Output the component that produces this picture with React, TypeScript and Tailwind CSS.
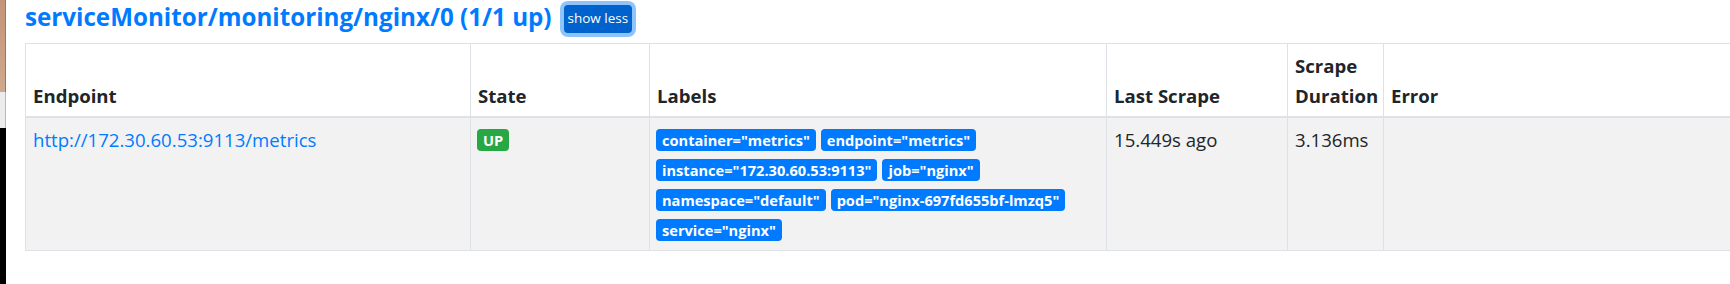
import { FC } from "react";

type Target = {
    endpoint: string;
    state: string;
    labels: string[][];
    lastScrape: string;
    duration: string;
    error: string;
};

const target: Target = {
    endpoint: "http://172.30.60.53:9113/metrics",
    state: "UP",
    labels: [
        ['container="metrics"', 'endpoint="metrics"'],
        ['instance="172.30.60.53:9113"', 'job="nginx"'],
        ['namespace="default"', 'pod="nginx-697fd655bf-lmzq5"'],
        ['service="nginx"'],
    ],
    lastScrape: "15.449s ago",
    duration: "3.136ms",
    error: "",
};

const th = "border-t border-l border-b-2 border-[#dee2e6] px-[7px] pt-[7px] pb-[5px] align-bottom text-left font-bold";
const td = "border-l border-b border-[#dee2e6] px-[7px] pt-[7px] pb-[5px] align-top";

const Badge: FC<{ text: string; green?: boolean }> = ({ text, green }) => (
    <span
        className={`inline-flex items-center h-[22px] px-[6px] rounded-[4px] text-[14.6px] font-bold leading-none text-white whitespace-nowrap ${
            green ? "bg-[#28a745]" : "bg-[#007bff]"
        }`}
    >
        {text}
    </span>
);

const App: FC = () => {
    return (
        <div className="flex w-[1730px] h-[284px] overflow-hidden bg-white font-['Open_Sans',sans-serif] text-[#212529]">
            {/* edge of the neighbouring window */}
            <div className="flex flex-col w-[6px] shrink-0">
                <div className="h-[92px] bg-gradient-to-b from-[#c39479] to-[#d0a98e] border-r border-[#8a7a70]" />
                <div className="h-[36px] bg-[#ececec] border-r border-[#b8b8b8]" />
                <div className="flex-1 bg-black" />
            </div>

            <div className="flex-1 min-w-0 pl-[19px]">
                <div className="flex items-start h-[43px]">
                    <h3 className="shrink-0 text-[24.2px] leading-[33px] font-bold text-[#007bff] whitespace-nowrap">
                        serviceMonitor/monitoring/nginx/0 (1/1 up)
                    </h3>
                    <button className="shrink-0 ml-[12px] mt-[5px] h-[28px] px-[4px] rounded-[4px] bg-[#0062cc] text-white text-[13.5px] leading-none whitespace-nowrap ring-4 ring-[#8fc3fb]">
                        show less
                    </button>
                </div>

                <table className="table-fixed border-separate border-spacing-0 w-[1720px] text-[18.6px] leading-[30px]">
                    <colgroup>
                        <col className="w-[445px]" />
                        <col className="w-[179px]" />
                        <col className="w-[457px]" />
                        <col className="w-[181px]" />
                        <col className="w-[96px]" />
                        <col />
                    </colgroup>
                    <thead>
                        <tr>
                            <th className={th}>Endpoint</th>
                            <th className={th}>State</th>
                            <th className={th}>Labels</th>
                            <th className={th}>Last Scrape</th>
                            <th className={th}>Scrape Duration</th>
                            <th className={th}>Error</th>
                        </tr>
                    </thead>
                    <tbody>
                        <tr className="bg-[#f2f2f2]">
                            <td className={td}>
                                <a href="#" className="text-[#007bff]">
                                    {target.endpoint}
                                </a>
                            </td>
                            <td className={td}>
                                <div className="flex items-center h-[30px] -ml-[1px]">
                                    <Badge text={target.state} green />
                                </div>
                            </td>
                            <td className={td}>
                                {target.labels.map((row, i) => (
                                    <div key={i} className="flex items-center gap-[5px] h-[30px] -ml-[1px]">
                                        {row.map((l) => (
                                            <Badge key={l} text={l} />
                                        ))}
                                    </div>
                                ))}
                            </td>
                            <td className={td}>{target.lastScrape}</td>
                            <td className={td}>{target.duration}</td>
                            <td className={td}>{target.error}</td>
                        </tr>
                    </tbody>
                </table>
            </div>
        </div>
    );
};

export default App;
